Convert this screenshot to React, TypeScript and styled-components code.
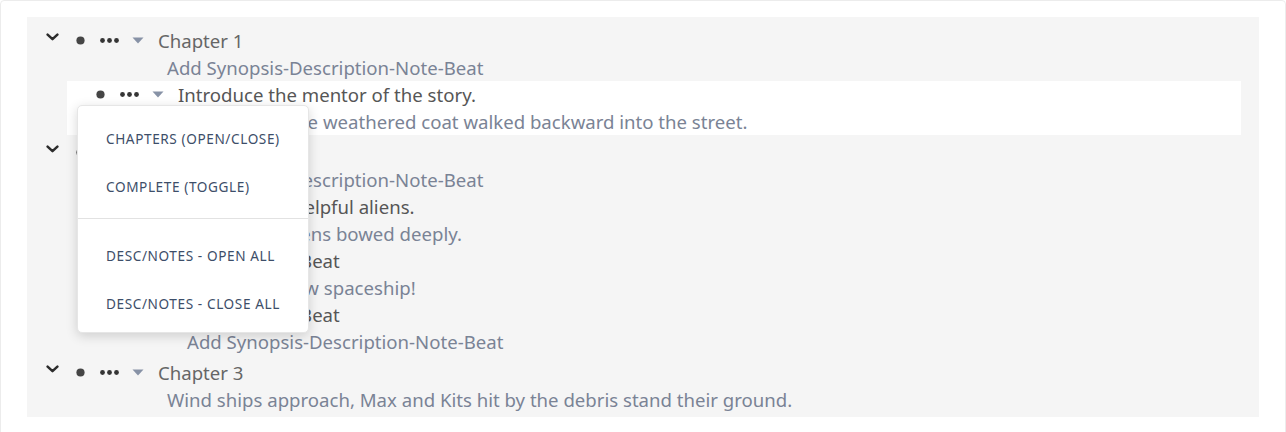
import React from "react";
import styled, { createGlobalStyle } from "styled-components";

const Global = createGlobalStyle`
  html, body { margin: 0; padding: 0; background: #ffffff; }
  body { font-family: "Noto Sans", "Open Sans", sans-serif; }
`;

const Card = styled.div`
  border: 1px solid #ececec;
  border-radius: 4px;
  padding: 16px 26px 24px;
  background: #ffffff;
`;

const Panel = styled.div`
  position: relative;
  background: #f5f5f5;
  padding: 10px 18px 4px 20px;
`;

const Block = styled.div<{ $gap?: number }>`
  margin-top: ${(p) => p.$gap ?? 0}px;
`;

const Row = styled.div`
  display: flex;
  align-items: center;
  height: 27px;
`;

const BeatBox = styled.div<{ $active?: boolean }>`
  margin-left: 20px;
  background: ${(p) => (p.$active ? "#ffffff" : "transparent")};
`;

const Slot = styled.span<{ $w: number; $start?: boolean }>`
  width: ${(p) => p.$w}px;
  flex: none;
  display: flex;
  align-items: center;
  justify-content: ${(p) => (p.$start ? "flex-start" : "center")};
`;

const ChevronIcon = styled.svg`
  margin-left: -1px;
  margin-bottom: 7px;
`;

const Title = styled.span<{ $beat?: boolean }>`
  margin-left: 7px;
  font-size: 18.6px;
  line-height: 27px;
  color: ${(p) => (p.$beat ? "#565656" : "#666666")};
  white-space: nowrap;
`;

const Desc = styled.div`
  font-size: 18.6px;
  line-height: 27px;
  height: 27px;
  color: #7a8395;
  white-space: nowrap;
  padding-left: 120px;
`;

const Menu = styled.div`
  position: absolute;
  left: 50px;
  top: 88px;
  width: 230px;
  background: #ffffff;
  border: 1px solid #e6e6e6;
  border-radius: 5px;
  box-shadow: 0 3px 12px rgba(0, 0, 0, 0.16);
  z-index: 10;
`;

const MenuSection = styled.div<{ $top: number; $bottom: number; $divider?: boolean }>`
  padding: ${(p) => p.$top}px 0 ${(p) => p.$bottom}px;
  ${(p) => (p.$divider ? "border-top: 1px solid #e2e2e2;" : "")}
`;

const MenuItem = styled.div`
  height: 48px;
  display: flex;
  align-items: center;
  padding-left: 28px;
  font-size: 13.6px;
  letter-spacing: 0.6px;
  color: #3d4e69;
  white-space: nowrap;
`;

const Chevron = () => (
  <ChevronIcon width="13" height="8" viewBox="0 0 13 8">
    <path d="M1.6 1.6 L6.5 6.2 L11.4 1.6" fill="none" stroke="#2c2c2c" strokeWidth="2.5" strokeLinecap="round" strokeLinejoin="round" />
  </ChevronIcon>
);

const Dot = () => (
  <svg width="9" height="9" viewBox="0 0 9 9">
    <circle cx="4.5" cy="4.5" r="4.1" fill="#454545" />
  </svg>
);

const Ellipsis = () => (
  <svg width="19" height="5" viewBox="0 0 19 5">
    <circle cx="2.5" cy="2.5" r="2.4" fill="#353535" />
    <circle cx="9.5" cy="2.5" r="2.4" fill="#353535" />
    <circle cx="16.5" cy="2.5" r="2.4" fill="#353535" />
  </svg>
);

const Caret = () => (
  <svg width="12" height="7" viewBox="0 0 12 7">
    <path d="M0.5 0.5 H11.5 L6 6.5 Z" fill="#8792a6" />
  </svg>
);

const Controls = () => (
  <>
    <Slot $w={26}><Dot /></Slot>
    <Slot $w={32}><Ellipsis /></Slot>
    <Slot $w={26}><Caret /></Slot>
  </>
);

type Beat = { title: string; desc: string; active?: boolean };
type Chapter = { title: string; synopsis: string; gap?: number; beats: Beat[] };

const chapters: Chapter[] = [
  {
    title: "Chapter 1",
    synopsis: "Add Synopsis-Description-Note-Beat",
    beats: [
      {
        title: "Introduce the mentor of the story.",
        desc: "The man in the weathered coat walked backward into the street.",
        active: true,
      },
    ],
  },
  {
    title: "Chapter 2",
    synopsis: "Add Synopsis-Description-Note-Beat",
    gap: 4,
    beats: [
      { title: "Max met the helpful aliens.", desc: "The green aliens bowed deeply." },
      { title: "Add Synopsis-Beat", desc: "They got a new spaceship!" },
      { title: "Add Synopsis-Beat", desc: "Add Synopsis-Description-Note-Beat" },
    ],
  },
  {
    title: "Chapter 3",
    synopsis: "Wind ships approach, Max and Kits hit by the debris stand their ground.",
    gap: 4,
    beats: [],
  },
];

export default function App() {
  return (
    <>
      <Global />
      <Card>
        <Panel>
          {chapters.map((c) => (
            <Block key={c.title} $gap={c.gap}>
              <Row>
                <Slot $w={20} $start><Chevron /></Slot>
                <Controls />
                <Title>{c.title}</Title>
              </Row>
              <Desc>{c.synopsis}</Desc>
              {c.beats.map((b, i) => (
                <BeatBox key={i} $active={b.active}>
                  <Row>
                    <Slot $w={20} />
                    <Controls />
                    <Title $beat>{b.title}</Title>
                  </Row>
                  <Desc>{b.desc}</Desc>
                </BeatBox>
              ))}
            </Block>
          ))}
          <Menu>
            <MenuSection $top={8} $bottom={8}>
              <MenuItem>CHAPTERS (OPEN/CLOSE)</MenuItem>
              <MenuItem>COMPLETE (TOGGLE)</MenuItem>
            </MenuSection>
            <MenuSection $top={12} $bottom={5} $divider>
              <MenuItem>DESC/NOTES - OPEN ALL</MenuItem>
              <MenuItem>DESC/NOTES - CLOSE ALL</MenuItem>
            </MenuSection>
          </Menu>
        </Panel>
      </Card>
    </>
  );
}
